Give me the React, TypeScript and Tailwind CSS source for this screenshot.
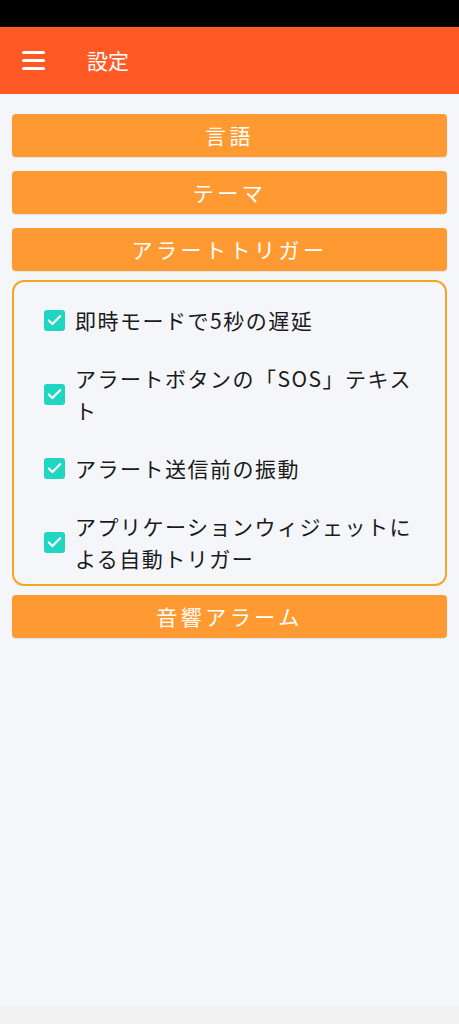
import { Check } from 'lucide-react';

const options = [
  '即時モードで5秒の遅延',
  'アラートボタンの「SOS」テキスト',
  'アラート送信前の振動',
  'アプリケーションウィジェットによる自動トリガー',
];

function OrangeButton({ label }: { label: string }) {
  return (
    <button className="w-full h-[43px] rounded-[4px] bg-[#FF9A33] text-white text-[21px] tracking-[3.5px] flex items-center justify-center shadow-[0_1px_1px_rgba(0,0,0,0.08)]">
      {label}
    </button>
  );
}

export default function App() {
  return (
    <div
      className="w-[459px] h-[1024px] flex flex-col bg-[#F5F6FA]"
      style={{ fontFamily: '"Noto Sans CJK JP", "Noto Sans", sans-serif' }}
    >
      {/* status bar */}
      <div className="h-[27px] bg-black" />

      {/* app bar */}
      <div className="h-[67px] bg-[#FF5A26] flex items-center px-[22px]">
        <div className="w-[23px] flex flex-col gap-[5px]">
          <span className="h-[3px] bg-white rounded-sm" />
          <span className="h-[3px] bg-white rounded-sm" />
          <span className="h-[3px] bg-white rounded-sm" />
        </div>
        <span className="ml-[42px] text-white text-[21px]">設定</span>
      </div>

      {/* settings list */}
      <div className="flex-1 px-[12px] pt-[20px] flex flex-col gap-[14px]">
        <OrangeButton label="言語" />
        <OrangeButton label="テーマ" />
        <div className="flex flex-col gap-[9px]">
          <OrangeButton label="アラートトリガー" />
          <div className="border-2 border-[#F5A623] rounded-[12px] pl-[30px] pr-[25px] pt-[14px] pb-[10px] flex flex-col gap-[18px]">
            {options.map((opt) => (
              <label key={opt} className="min-h-[48px] flex items-center gap-[10px]">
                <span className="w-[21px] h-[21px] shrink-0 rounded-[3px] bg-[#1FD6C1] flex items-center justify-center">
                  <Check className="w-[17px] h-[17px] text-white" strokeWidth={3.2} />
                </span>
                <span className="text-[21px] leading-[32px] tracking-[1.5px] text-[#1a1a1a]">{opt}</span>
              </label>
            ))}
          </div>
          <OrangeButton label="音響アラーム" />
        </div>
      </div>

      {/* nav bar area */}
      <div className="h-[18px] bg-[#F2F2F2]" />
    </div>
  );
}
